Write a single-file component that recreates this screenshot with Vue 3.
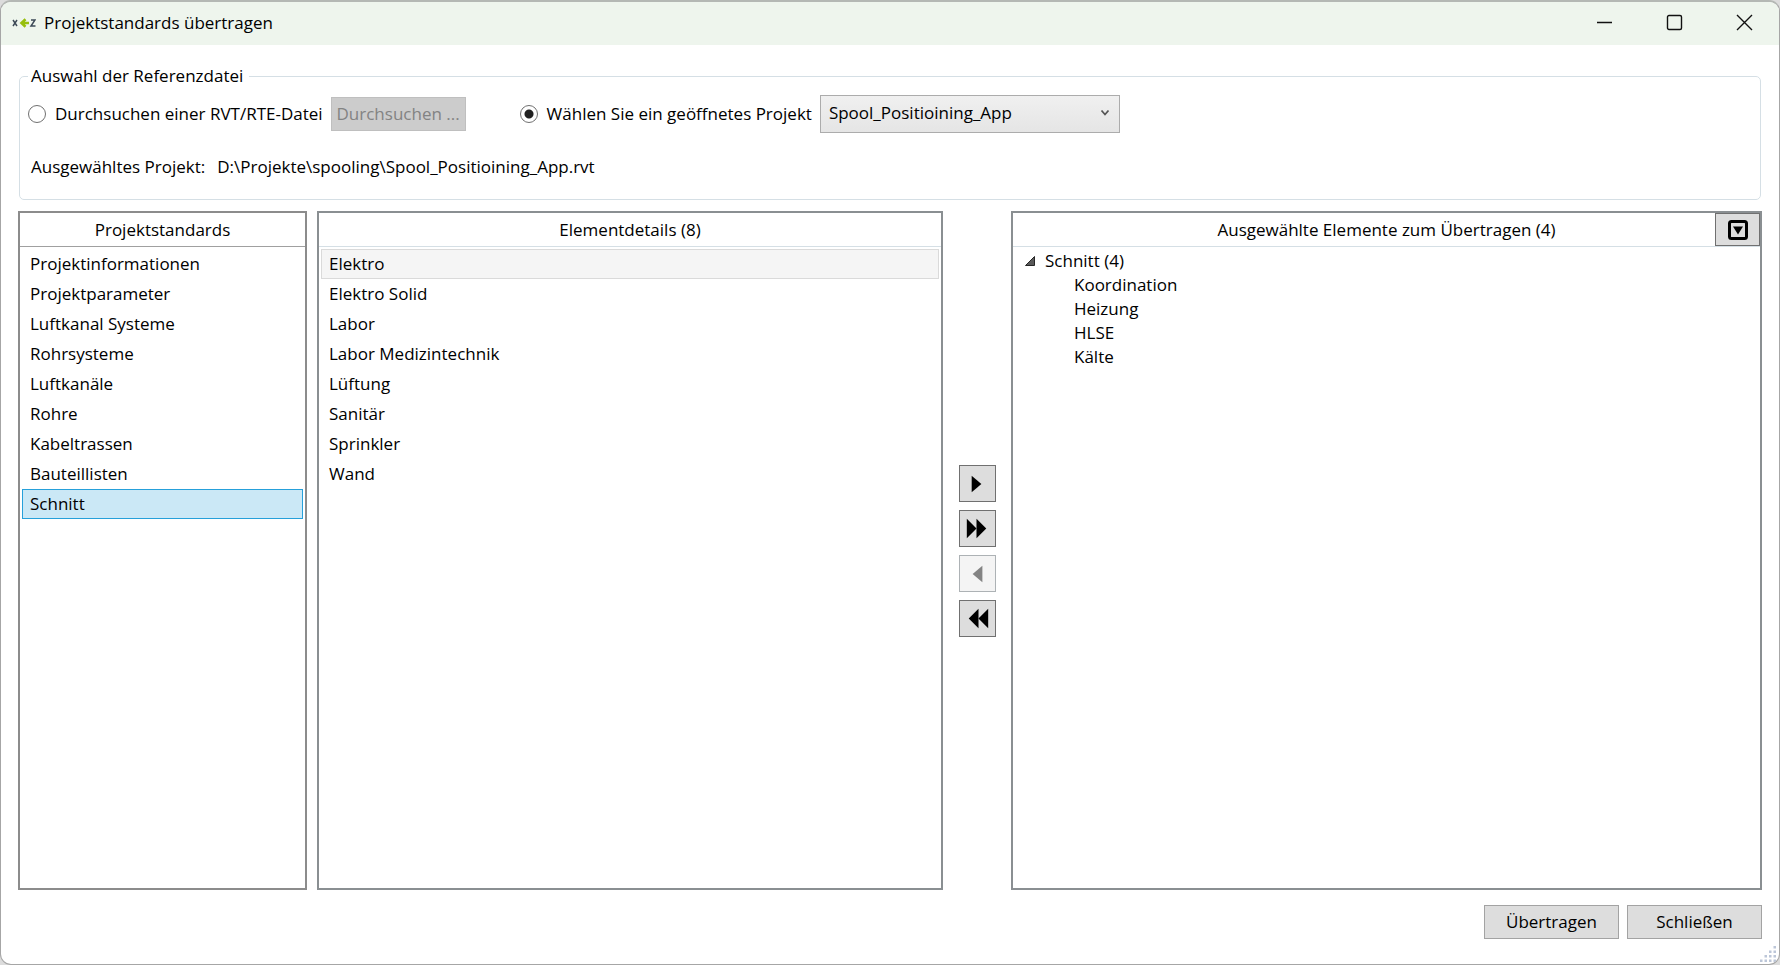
<script setup>
import { ref } from 'vue'

const source = ref('open')
const project = ref('Spool_Positioining_App')
const standards = [
  'Projektinformationen', 'Projektparameter', 'Luftkanal Systeme', 'Rohrsysteme', 'Luftkanäle',
  'Rohre', 'Kabeltrassen', 'Bauteillisten', 'Schnitt',
]
const activeStandard = ref('Schnitt')
const details = [
  'Elektro', 'Elektro Solid', 'Labor', 'Labor Medizintechnik', 'Lüftung', 'Sanitär', 'Sprinkler', 'Wand',
]
const activeDetail = ref('Elektro')
const chosen = ['Koordination', 'Heizung', 'HLSE', 'Kälte']
const expanded = ref(true)
const movers = [
  { label: 'Hinzufügen', points: ['12,10 22,18.5 12,27'] },
  { label: 'Alle hinzufügen', points: ['7,8 17,18 7,28', '17,8 27,18 17,28'] },
  { label: 'Entfernen', points: ['23,10 13,18.5 23,27'], disabled: true },
  { label: 'Alle entfernen', points: ['19,8 9,18 19,28', '29,8 19,18 29,28'] },
]
// Resize grip dots as [column, row]
const grip = [[3, 0], [2, 1], [3, 1], [1, 2], [2, 2], [3, 2], [0, 3], [1, 3], [2, 3], [3, 3]]
</script>

<template>
  <div class="window">
    <header class="titlebar">
      <svg class="logo" width="24" height="12" viewBox="0 0 24 12" aria-hidden="true">
        <path d="M1 3l4 6M5 3l-4 6" stroke="#3d4a57" stroke-width="1.5" fill="none" />
        <path d="M17 6H10M13.500 2.200L9.500 6l4 3.800" stroke="#97bf0d" stroke-width="2.600" fill="none" />
        <path d="M19 3h4l-4 6h4.500" stroke="#3d4a57" stroke-width="1.500" fill="none" />
      </svg>
      <h1>Projektstandards übertragen</h1>
      <div class="controls">
        <button type="button" aria-label="Minimieren">
          <svg width="17" height="17" viewBox="0 0 17 17"><path d="M1 8.500h15" /></svg>
        </button>
        <button type="button" aria-label="Maximieren">
          <svg width="17" height="17" viewBox="0 0 17 17"><rect x="1.500" y="1.500" width="14" height="14" rx="1.500" /></svg>
        </button>
        <button type="button" aria-label="Fenster schließen">
          <svg width="17" height="17" viewBox="0 0 17 17"><path d="M1 1l15 15M16 1L1 16" /></svg>
        </button>
      </div>
    </header>

    <main>
      <fieldset>
        <legend>Auswahl der Referenzdatei</legend>
        <div class="source">
          <label class="radio"><input v-model="source" type="radio" name="source" value="file" />Durchsuchen einer RVT/RTE-Datei</label>
          <button class="btn browse" type="button" :disabled="source !== 'file'">Durchsuchen ...</button>
          <label class="radio"><input v-model="source" type="radio" name="source" value="open" />Wählen Sie ein geöffnetes Projekt</label>
          <div class="combo">
            <select v-model="project" aria-label="Geöffnetes Projekt">
              <option>Spool_Positioining_App</option>
            </select>
            <svg width="10" height="8" viewBox="0 0 10 8" aria-hidden="true"><path d="M1.500 1.500L5 5.500l3.500-4" /></svg>
          </div>
        </div>
        <p class="path"><span>Ausgewähltes Projekt:</span><span>D:\Projekte\spooling\Spool_Positioining_App.rvt</span></p>
      </fieldset>

      <div class="panels">
        <section class="panel first">
          <div class="head"><h2>Projektstandards</h2></div>
          <ul class="list">
            <li v-for="s in standards" :key="s">
              <button type="button" :class="{ active: s === activeStandard }" @click="activeStandard = s">{{ s }}</button>
            </li>
          </ul>
        </section>

        <section class="panel second">
          <div class="head"><h2>Elementdetails (8)</h2></div>
          <ul class="list">
            <li v-for="d in details" :key="d">
              <button type="button" :class="{ inactive: d === activeDetail }" @click="activeDetail = d">{{ d }}</button>
            </li>
          </ul>
        </section>

        <div class="movers">
          <button v-for="m in movers" :key="m.label" type="button" :aria-label="m.label" :disabled="m.disabled">
            <svg width="35" height="35" viewBox="0 0 36 36"><polygon v-for="p in m.points" :key="p" :points="p" /></svg>
          </button>
        </div>

        <section class="panel third">
          <div class="head">
            <h2>Ausgewählte Elemente zum Übertragen (4)</h2>
            <button class="collapse" type="button" aria-label="Alle einklappen">
              <svg width="20" height="20" viewBox="0 0 20 20">
                <rect x="1.500" y="1.500" width="17" height="17" rx="2" />
                <path d="M5 6.500h10l-5 8z" />
              </svg>
            </button>
          </div>
          <div class="tree">
            <button class="node" type="button" :aria-expanded="expanded" @click="expanded = !expanded">
              <svg width="10" height="10" viewBox="0 0 10 10"><path d="M9.500 .5v9h-9z" /></svg>
              Schnitt (4)
            </button>
            <ul v-if="expanded">
              <li v-for="c in chosen" :key="c">{{ c }}</li>
            </ul>
          </div>
        </section>
      </div>

      <footer>
        <button class="btn" type="button">Übertragen</button>
        <button class="btn" type="button">Schließen</button>
      </footer>
    </main>

    <svg class="grip" width="16" height="16" viewBox="0 0 16 16" aria-hidden="true">
      <rect v-for="([x, y], i) in grip" :key="i" :x="x * 4.500" :y="y * 4.500" width="2.500" height="2.500" />
    </svg>
  </div>
</template>

<style>
body {
  background: #dcdcdc;
}
</style>

<style scoped>
* {
  box-sizing: border-box;
}
.window {
  position: relative;
  display: flex;
  flex-direction: column;
  min-height: 100vh;
  border: 1px solid #a6a6a6;
  border-top: 2px solid #b4b8b4;
  border-radius: 11px;
  overflow: hidden;
  background: #fff;
  color: #000;
  font: 17px/24px "Segoe UI", "Open Sans", "Noto Sans", sans-serif;
}
button,
select {
  font: inherit;
  color: inherit;
  margin: 0;
  padding: 0;
}
h1,
h2,
p,
ul {
  margin: 0;
  padding: 0;
  font: inherit;
  list-style: none;
}
.titlebar {
  display: flex;
  align-items: center;
  height: 43px;
  padding: 0 0 2px 11px;
  background: #eef5ed;
}
.logo {
  margin-right: 8px;
}
h1 {
  flex: 1;
}
.controls {
  display: flex;
  height: 100%;
}
.controls button {
  display: grid;
  place-items: center;
  width: 70px;
  border: 0;
  background: none;
}
.controls svg {
  fill: none;
  stroke: #111;
  stroke-width: 1.400;
}
main {
  flex: 1;
  display: flex;
  flex-direction: column;
  padding: 19px 17px 25px 17px;
}
fieldset {
  min-width: 0;
  height: 136px;
  margin: 0 1px;
  padding: 6px 8px 0;
  border: 1px solid #d5dfe5;
  border-radius: 5px;
}
legend {
  height: 25px;
  padding: 0 6px 0 3px;
}
.source {
  display: flex;
  align-items: center;
  height: 38px;
}
.radio {
  display: flex;
  align-items: center;
  white-space: nowrap;
}
.radio input {
  appearance: none;
  width: 18px;
  height: 18px;
  margin: 0 9px 0 0;
  border: 1px solid #707070;
  border-radius: 50%;
  background: #fff;
}
.radio input:checked {
  background: radial-gradient(circle, #212121 4px, #fff 5px);
}
.btn {
  width: 135px;
  height: 34px;
  border: 1px solid #a3a3a3;
  background: #ddd;
}
.browse {
  margin: 0 54px 0 8px;
}
.browse:disabled {
  border-color: #bfbfbf;
  background: #ccc;
  color: #838383;
}
.combo {
  display: grid;
  align-items: center;
  width: 300px;
  margin-left: 8px;
}
.combo select {
  grid-area: 1 / 1;
  appearance: none;
  height: 38px;
  padding: 0 32px 2px 8px;
  border: 1px solid #acacac;
  border-radius: 0;
  background: linear-gradient(#f0f0f0, #e5e5e5);
}
.combo svg {
  grid-area: 1 / 1;
  justify-self: end;
  margin: 0 10px 2px 0;
  fill: none;
  stroke: #555;
  stroke-width: 1.800;
  pointer-events: none;
}
.path {
  display: flex;
  gap: 12px;
  padding: 22px 3px 0;
}
.panels {
  flex: 1;
  display: grid;
  grid-template-columns: 289px minmax(0, 636fr) 68px minmax(0, 751fr);
  margin-top: 11px;
}
.panel {
  min-width: 0;
  border: 2px solid #8a8f92;
}
.first {
  border-color: #8c8c8c;
}
.second {
  margin-left: 10px;
}
.head {
  position: relative;
  display: flex;
  height: 34px;
  border-bottom: 1px solid #d5dfe5;
}
.first .head {
  border-color: #a0a0a0;
}
h2 {
  flex: 1;
  align-self: center;
  text-align: center;
}
.list {
  padding: 2px;
}
.list button {
  display: block;
  width: 100%;
  height: 30px;
  padding: 0 7px;
  border: 1px solid transparent;
  background: none;
  text-align: left;
}
.list .active {
  border-color: #26a0da;
  background: #cbe8f6;
}
.list .inactive {
  border-color: #dadada;
  background: #f5f5f5;
}
.movers {
  display: flex;
  flex-direction: column;
  align-items: center;
  justify-content: center;
  gap: 8px;
}
.movers button {
  width: 37px;
  height: 37px;
  border: 1px solid #707070;
  background: #ddd;
}
.movers svg {
  display: block;
}
.movers button:disabled {
  border-color: #adb2b5;
  background: #f4f4f4;
  fill: #838383;
}
.third h2 {
  padding-left: 45px;
}
.collapse {
  display: grid;
  place-items: center;
  width: 45px;
  border: 1px solid #707070;
  background: #ddd;
}
.collapse rect {
  fill: none;
  stroke: #000;
  stroke-width: 3;
}
.tree {
  padding: 2px 12px;
}
.node {
  display: flex;
  align-items: center;
  gap: 10px;
  height: 24px;
  border: 0;
  background: none;
}
.node path {
  fill: #595959;
  stroke: #262626;
}
.tree li {
  padding-left: 49px;
}
footer {
  display: flex;
  justify-content: flex-end;
  gap: 8px;
  margin-top: 15px;
}
.grip {
  position: absolute;
  right: 3px;
  bottom: 2px;
  fill: #bcc6d8;
}
</style>
